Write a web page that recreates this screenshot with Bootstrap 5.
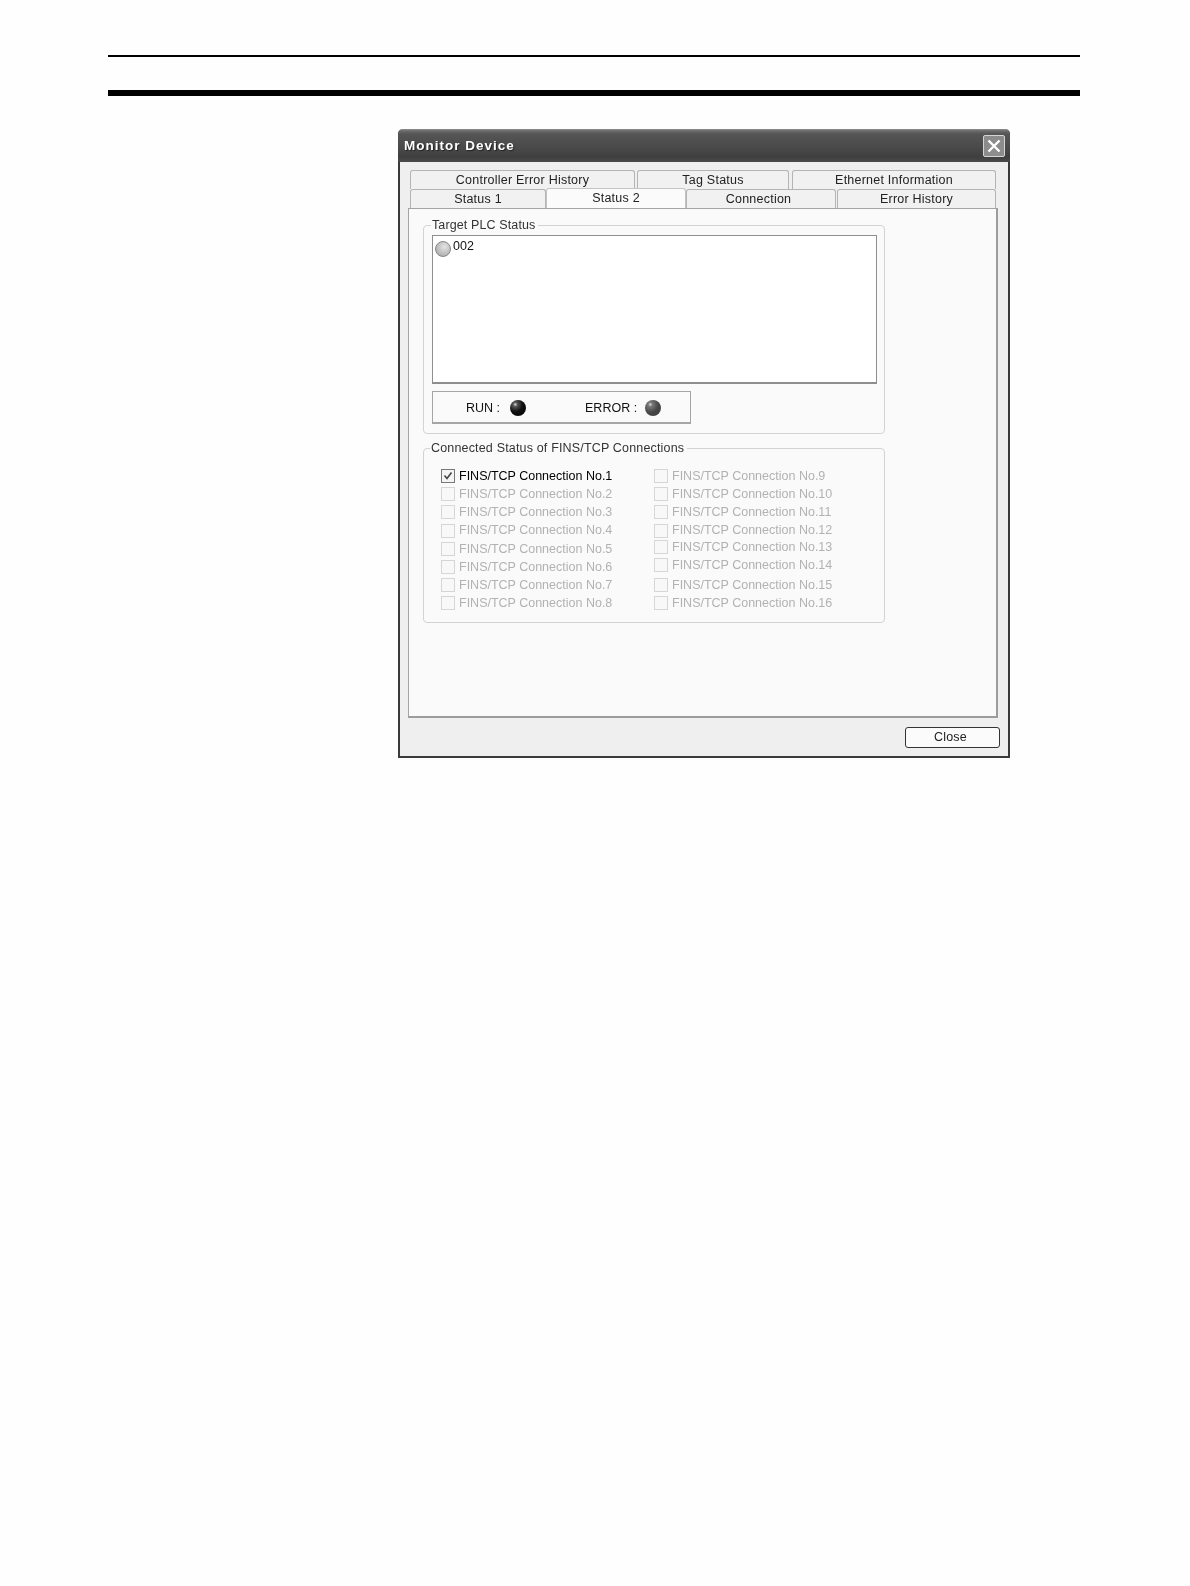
<!DOCTYPE html>
<html lang="en">
<head>
<meta charset="utf-8">
<title>Monitor Device</title>
<link href="https://cdn.jsdelivr.net/npm/bootstrap@5.3.0/dist/css/bootstrap.min.css" rel="stylesheet">
<style>
html,body{background:#fefefe;margin:0}
body{font-family:"Liberation Sans",Arial,sans-serif;color:#111}
.sheet{width:972px;margin-left:108px;padding-top:55px;height:1586px}
.rule-thin{height:2px;background:#000}
.rule-thick{height:6px;background:#000;margin-top:33px}
.dialog{width:612px;height:629px;margin:33px 0 0 290px;background:#efefef;border:2px solid #3a3a3a;border-top:0;border-radius:5px 5px 0 0;font-size:12.5px;line-height:1;filter:blur(.4px)}
.titlebar{height:33px;margin:0 -2px;background:linear-gradient(#8f8f8f 0,#6a6a6a 2px,#555 5px,#484848 20px,#3f3f3f 28px,#4a4a4a 100%);background-color:#444;border-radius:5px 5px 0 0;padding:0 5px 0 6px}
.titletext{color:#fff;font-weight:700;font-size:13.5px;letter-spacing:1px;text-shadow:1px 1px 1px #222;padding-top:1px}
.closex{width:22px;height:22px;background:#8c8c8c;border:1px solid #d5d5d5;border-radius:2px}
.tabarea{padding:8px 0 0 10px;width:600px}
.tabrow{height:19px}
.wintab{background:#f1f1f1;border:1px solid #b4b4b4;border-bottom:0;border-radius:3px 3px 0 0;text-align:center;letter-spacing:.23px;color:#222;padding-top:3px;flex:none}
.t1{width:225px;margin-right:2px}.t2{width:152px;margin-right:3px}.t3{width:204px}
.t4{width:136px}.t5{width:140px}.t6{width:150px;margin-right:1px;padding-right:5px}.t7{width:159px}
.wintab.active{background:#fbfbfb;height:20px;margin-top:-1px;padding-top:3px;position:relative;z-index:2;border-color:#c4c4c4}
.tabpanel{width:590px;height:510px;margin-left:8px;background:#fafafa;border:1px solid #a4a4a4;border-right:2px solid #9c9c9c;border-bottom:2px solid #9c9c9c;padding:9px 0 0 14px;position:relative;z-index:1}
.grp{width:462px;border:1px solid #d3d3d3;border-radius:4px;padding:0 8px;margin:0}
.grp legend{float:none;width:auto;font-size:12.5px;line-height:14px;margin:0 0 0 -1px;padding:0 3px 0 1px;color:#333;letter-spacing:.12px}
.grp-a{height:216px}
.grp-b{height:182px;margin-top:7px}
.grp-b legend{letter-spacing:.17px;margin-left:-2px}
.listbox{width:445px;height:149px;margin-top:3px;background:#fff;border:1px solid #8e8e8e;border-bottom-width:2px;padding:3px 2px}
.listbox .itemtext{padding-top:1px;margin-left:-2px}
.lamp{width:16px;height:16px;border-radius:50%;border:1px solid #888;background:radial-gradient(circle at 60% 35%,#e4e4e4,#b4b4b4 70%,#9a9a9a);margin-top:2px}
.statusbox{width:259px;height:33px;margin-top:7px;border:1px solid #a5a5a5;border-bottom-width:2px;padding:2px 0 0 33px}
.lbl-err{margin-left:59px}
.ball{width:16px;height:16px;border-radius:50%;margin-left:10px;background:radial-gradient(circle at 33% 28%,#ddd 0,#555 14%,#111 45%,#000 100%)}
.ball-g{background:radial-gradient(circle at 33% 28%,#ddd 0,#777 14%,#474747 50%,#3a3a3a 100%);margin-left:8px}
.chkgrid{display:grid;grid-template-columns:213px 1fr;grid-template-rows:repeat(8,18.2px);grid-auto-flow:column;padding:12px 0 0 9px;margin:0}
.chk{width:14px;height:14px;border:1px solid #d6d6d6;background:#f8f8f8;margin-right:4px;flex:none}
.chk.on{border-color:#777;background:#f4f4f4}
.chk svg{display:block}
.dim{color:#b2b2b2}
.lit{color:#000}
.shifted{margin-bottom:4px}
.closebtn{width:95px;height:21px;background:#fbfbfb;border:1px solid #333;border-radius:3px;font-size:12.5px;line-height:1;padding:0 4px 0 0;color:#222;letter-spacing:.2px}
.foot{padding-top:9px;width:600px}
</style>
</head>
<body>
<div class="sheet">
  <div class="rule-thin"></div>
  <div class="rule-thick"></div>
  <div class="dialog">
    <div class="titlebar d-flex align-items-center justify-content-between">
      <span class="titletext">Monitor Device</span>
      <span class="closex d-flex align-items-center justify-content-center">
        <svg width="16" height="16" viewBox="0 0 16 16"><path d="M2.5 2.5 13.5 13.5M13.5 2.5 2.5 13.5" stroke="#fff" stroke-width="2.4" fill="none"/></svg>
      </span>
    </div>
    <div class="tabarea">
      <div class="tabrow d-flex">
        <div class="wintab t1">Controller Error History</div>
        <div class="wintab t2">Tag Status</div>
        <div class="wintab t3">Ethernet Information</div>
      </div>
      <div class="tabrow d-flex">
        <div class="wintab t4">Status 1</div>
        <div class="wintab t5 active">Status 2</div>
        <div class="wintab t6">Connection</div>
        <div class="wintab t7">Error History</div>
      </div>
    </div>
    <div class="tabpanel">
      <fieldset class="grp grp-a">
        <legend>Target PLC Status</legend>
        <div class="listbox d-flex gap-1">
          <span class="lamp"></span><span class="itemtext">002</span>
        </div>
        <div class="statusbox d-flex align-items-center">
          <span>RUN :</span><span class="ball"></span>
          <span class="lbl-err">ERROR :</span><span class="ball ball-g"></span>
        </div>
      </fieldset>
      <fieldset class="grp grp-b">
        <legend>Connected Status of FINS/TCP Connections</legend>
        <div class="chkgrid">
          <div class="d-flex align-items-center lit"><span class="chk on"><svg width="12" height="12" viewBox="0 0 12 12"><path d="M2.5 5.5 5 8.5 9.5 2.5" stroke="#444" stroke-width="1.6" fill="none"/></svg></span>FINS/TCP Connection No.1</div>
          <div class="d-flex align-items-center dim"><span class="chk"></span>FINS/TCP Connection No.2</div>
          <div class="d-flex align-items-center dim"><span class="chk"></span>FINS/TCP Connection No.3</div>
          <div class="d-flex align-items-center dim"><span class="chk"></span>FINS/TCP Connection No.4</div>
          <div class="d-flex align-items-center dim"><span class="chk"></span>FINS/TCP Connection No.5</div>
          <div class="d-flex align-items-center dim"><span class="chk"></span>FINS/TCP Connection No.6</div>
          <div class="d-flex align-items-center dim"><span class="chk"></span>FINS/TCP Connection No.7</div>
          <div class="d-flex align-items-center dim"><span class="chk"></span>FINS/TCP Connection No.8</div>
          <div class="d-flex align-items-center dim"><span class="chk"></span>FINS/TCP Connection No.9</div>
          <div class="d-flex align-items-center dim"><span class="chk"></span>FINS/TCP Connection No.10</div>
          <div class="d-flex align-items-center dim"><span class="chk"></span>FINS/TCP Connection No.11</div>
          <div class="d-flex align-items-center dim"><span class="chk"></span>FINS/TCP Connection No.12</div>
          <div class="d-flex align-items-center dim shifted"><span class="chk"></span>FINS/TCP Connection No.13</div>
          <div class="d-flex align-items-center dim shifted"><span class="chk"></span>FINS/TCP Connection No.14</div>
          <div class="d-flex align-items-center dim"><span class="chk"></span>FINS/TCP Connection No.15</div>
          <div class="d-flex align-items-center dim"><span class="chk"></span>FINS/TCP Connection No.16</div>
        </div>
      </fieldset>
    </div>
    <div class="foot d-flex justify-content-end">
      <button type="button" class="btn closebtn">Close</button>
    </div>
  </div>
</div>
<script src="https://cdn.jsdelivr.net/npm/bootstrap@5.3.0/dist/js/bootstrap.bundle.min.js"></script>
</body>
</html>
